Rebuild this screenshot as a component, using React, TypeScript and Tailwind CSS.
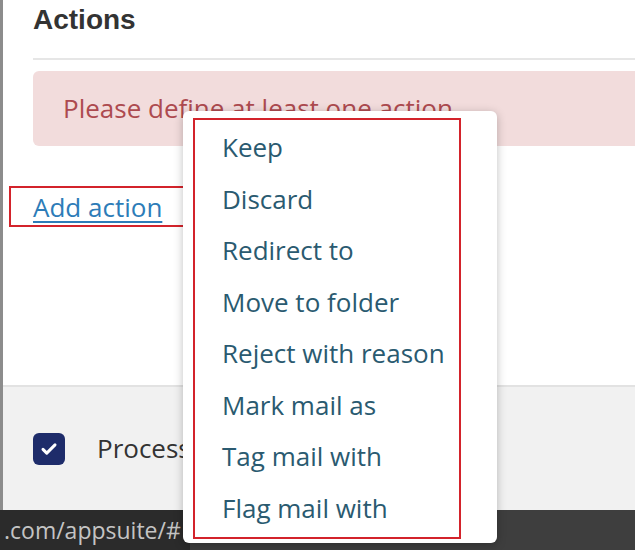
import React from 'react';

const actionItems = [
  'Keep',
  'Discard',
  'Redirect to',
  'Move to folder',
  'Reject with reason',
  'Mark mail as',
  'Tag mail with',
  'Flag mail with',
];

const App: React.FC = () => {
  return (
    <div className="relative w-[635px] h-[550px] overflow-hidden bg-[#3e3e3e] font-['Open_Sans',sans-serif]">
      {/* modal */}
      <div className="h-[510px] bg-white border-l-[3px] border-[#8c8c8c] flex flex-col">
        <div className="flex-1 pl-[30px]">
          <h2 className="pt-[3px] h-[60px] text-[28px] leading-[34px] font-bold text-[#333] font-['Liberation_Sans',sans-serif] border-b-2 border-[#e6e6e6]">
            Actions
          </h2>
          <div className="mt-[11px] h-[75px] bg-[#f2dcdc] rounded-l-md flex items-center pl-[30px] text-[26px] text-[#ad4a4f]">
            Please define at least one action
          </div>
          <div className="mt-[40px] ml-[-24px] w-[183px] h-[41px] border-2 border-[#d3232b] flex items-center pl-[22px]">
            <a href="#" className="text-[26px] text-[#2d7cb8] underline underline-offset-4 leading-none">
              Add action
            </a>
          </div>
        </div>
        <div className="h-[125px] bg-[#f1f1f1] border-t-2 border-[#e2e2e2] flex items-center pl-[30px] gap-[32px]">
          <span className="w-[32px] h-[32px] shrink-0 rounded-md bg-[#1e2c6a] flex items-center justify-center">
            <svg width="18" height="18" viewBox="0 0 24 24" fill="none" stroke="white" strokeWidth={4} strokeLinecap="round" strokeLinejoin="round">
              <path d="M4 12.5l5 5L20 6.5" />
            </svg>
          </span>
          {/* cut off where the open menu covers it */}
          <span className="w-[86px] overflow-hidden whitespace-nowrap text-[26px] text-[#333]">Process subsequent rules</span>
        </div>
      </div>

      {/* browser status bar */}
      <div className="absolute left-0 bottom-0 w-[190px] h-[40px] bg-[#2b2b2b] rounded-tr-md flex items-center pl-[4px] text-[23px] text-[#c4c4c4] leading-none">
        .com/appsuite/#
      </div>

      {/* dropdown menu */}
      <div className="absolute left-[183px] top-[111px] w-[314px] h-[432px] bg-white rounded-md shadow-[0_2px_10px_rgba(0,0,0,0.25)] pl-[10px] pt-[7px]">
        <ul className="w-[268px] h-[421px] border-2 border-[#d3232b] pt-[2px] pl-[27px]">
          {actionItems.map((item) => (
            <li key={item} className="h-[51.5px] flex items-center text-[26px] text-[#2a5a70] whitespace-nowrap">
              {item}
            </li>
          ))}
        </ul>
      </div>
    </div>
  );
};

export default App;
